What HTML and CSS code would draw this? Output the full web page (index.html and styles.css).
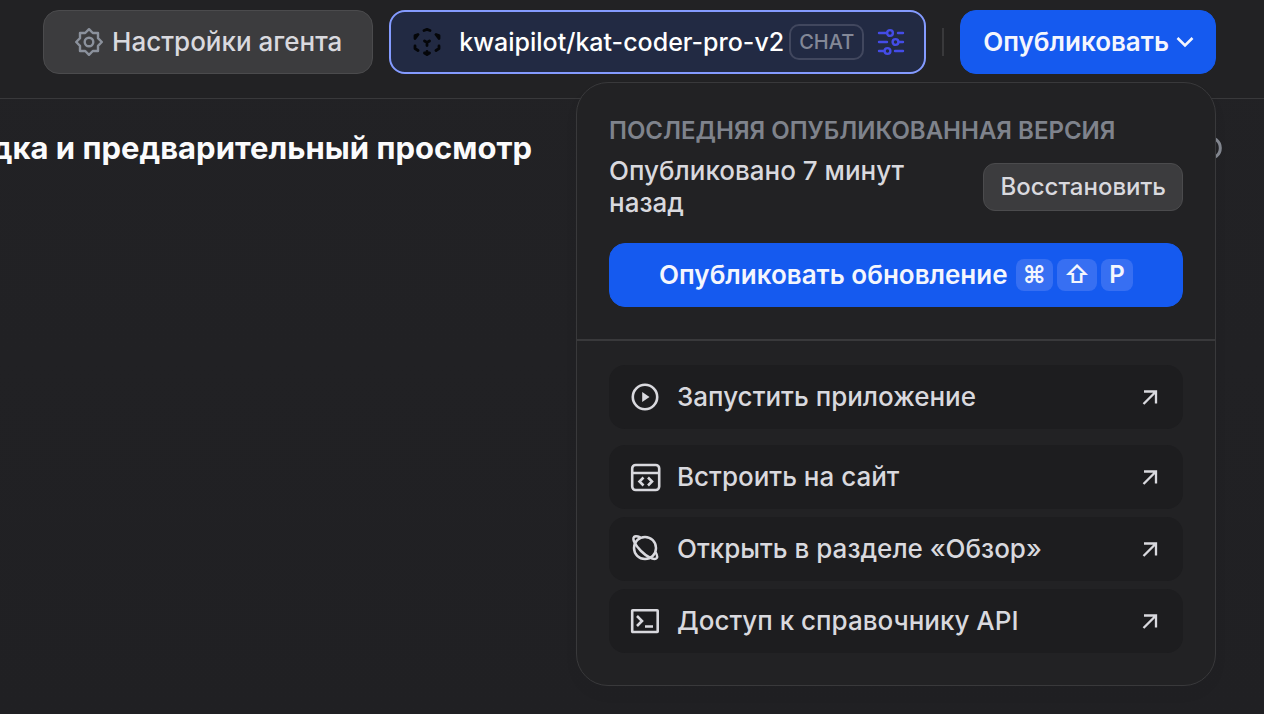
FILE: index.html
```html
<!doctype html>
<html lang="ru">
<head>
	<meta charset="UTF-8" />
	<meta name="viewport" content="width=device-width, initial-scale=1" />
	<title>Настройки агента</title>
	<link rel="stylesheet" href="styles.css">
</head>
<body>
	<header class="topbar">
		<button type="button" class="btn settings">
			<svg class="icon-sm" viewBox="0 0 28 28" fill="none" stroke="currentColor" stroke-width="2.4" stroke-linejoin="round">
				<path d="M14 1.2 17.800 5H23v5.200l3.800 3.800-3.800 3.800V23h-5.200L14 26.800 10.200 23H5v-5.200L1.200 14 5 10.200V5h5.200z"/>
				<circle cx="14" cy="14" r="4.300"/>
			</svg>
			Настройки агента
		</button>
		<button type="button" class="model">
			<svg class="icon-sm cube" viewBox="0 0 28 28" fill="none" stroke="currentColor" stroke-width="2.800" stroke-linecap="round" stroke-linejoin="round">
				<path d="M11 2.500 14 1.400l3 1.100M5 6.500 2 7.500V10.500zM23 6.500l3 1V10.500zM2 18v2.500L5 22.500M26 18v2.500L23 22.500M11.500 25l2.500 1.600 2.500-1.600zM14 23.500v2M11.500 13l2.500 1.500 2.500-1.500M14 15v2.500"/>
			</svg>
			<span class="model-name">kwaipilot/kat-coder-pro-v2</span>
			<span class="tag">CHAT</span>
			<svg class="icon-sm sliders" viewBox="0 0 28 28" fill="none" stroke="currentColor" stroke-width="2.400" stroke-linecap="round">
				<path d="M2 5h8M21 5h5M2 14h8M22 14h4M2 23h5M18 23h8"/>
				<circle cx="13" cy="5" r="2.900"/>
				<circle cx="18.500" cy="14" r="2.900"/>
				<circle cx="10.500" cy="23" r="2.900"/>
			</svg>
		</button>
		<span class="divider"></span>
		<div class="publish-wrap">
			<button type="button" class="btn primary publish" aria-expanded="true">
				Опубликовать
				<svg class="chevron" viewBox="0 0 20 20" fill="none" stroke="currentColor" stroke-width="2.600">
					<path d="m2.500 6 7.500 7.500L17.500 6"/>
				</svg>
			</button>

			<div class="menu">
				<section class="version">
					<h3>Последняя опубликованная версия</h3>
					<div class="version-row">
						<p>Опубликовано 7 минут назад</p>
						<button type="button" class="btn restore">Восстановить</button>
					</div>
					<button type="button" class="btn primary update">
						Опубликовать обновление
						<span class="keys"><kbd>⌘</kbd><kbd>⇧</kbd><kbd>P</kbd></span>
					</button>
				</section>
				<nav class="links">
					<a href="#" class="link run">
						<svg class="icon" viewBox="0 0 32 32" fill="none" stroke="currentColor" stroke-width="2.600">
							<circle cx="16" cy="16" r="12.200"/>
							<path d="M13.200 11v10l7.300-5z" fill="currentColor" stroke="none"/>
						</svg>
						<span>Запустить приложение</span>
						<svg class="arrow" viewBox="0 0 24 24" fill="none" stroke="currentColor" stroke-width="2.300"><path d="M5 6.500h12v12M16.500 7 4.500 19"/></svg>
					</a>
					<a href="#" class="link">
						<svg class="icon" viewBox="0 0 32 32" fill="none" stroke="currentColor" stroke-width="2.600">
							<rect x="3.200" y="4" width="27" height="25" rx="3.500"/>
							<path d="M3 12h27M14.500 16.500 10.500 20.500l4 4M19 16.500l4 4-4 4"/>
						</svg>
						<span>Встроить на сайт</span>
						<svg class="arrow" viewBox="0 0 24 24" fill="none" stroke="currentColor" stroke-width="2.300"><path d="M5 6.500h12v12M16.500 7 4.500 19"/></svg>
					</a>
					<a href="#" class="link">
						<svg class="icon" viewBox="0 0 32 32" fill="none" stroke="currentColor" stroke-width="2.500">
							<circle cx="16" cy="15" r="11"/>
							<path d="M11.500 4.500C8 3 6 3 5 4c-2 2.200 1.500 8.500 7 14s12.200 9.200 15.200 7.500c1.500-1 1-3.500-.7-6.500"/>
						</svg>
						<span>Открыть в разделе «Обзор»</span>
						<svg class="arrow" viewBox="0 0 24 24" fill="none" stroke="currentColor" stroke-width="2.300"><path d="M5 6.500h12v12M16.500 7 4.500 19"/></svg>
					</a>
					<a href="#" class="link">
						<svg class="icon" viewBox="0 0 32 32" fill="none" stroke="currentColor" stroke-width="2.600">
							<rect x="3.200" y="5.200" width="25.500" height="21.800" rx=".5"/>
							<path d="m8 11 5 5-5 5M16 21.500h8"/>
						</svg>
						<span>Доступ к справочнику API</span>
						<svg class="arrow" viewBox="0 0 24 24" fill="none" stroke="currentColor" stroke-width="2.300"><path d="M5 6.500h12v12M16.500 7 4.500 19"/></svg>
					</a>
				</nav>
			</div>
		</div>
	</header>

	<main class="preview">
		<h2>Отладка и предварительный просмотр</h2>
		<svg class="refresh" viewBox="0 0 32 32" fill="none" stroke="currentColor" stroke-width="3">
			<path d="M16 4.700c9 0 14.300 4.500 14.300 11.300S25 27.300 16 27.300"/>
		</svg>
	</main>
</body>
</html>
```

FILE: styles.css
```css
*{
	box-sizing: border-box;
	margin: 0;
	padding: 0;
}
body{
	min-height: 100vh;
	background: linear-gradient(#222225, #202023);
	color: #d9d9de;
	font-family: Inter, "Liberation Sans", sans-serif;
	font-size: 26px;
	font-weight: 500;
	line-height: 32px;
	overflow: hidden;
}
button{
	font: inherit;
	color: inherit;
	cursor: pointer;
}
svg{
	display: block;
	flex: none;
}

/* top bar */
.topbar{
	display: flex;
	justify-content: flex-end;
	align-items: center;
	gap: 16px;
	padding: 10px 48px 24px 0;
	background: #222224;
	border-bottom: 1px solid #39393b;
	white-space: nowrap;
}
.btn{
	display: flex;
	align-items: center;
	justify-content: center;
	height: 64px;
	border: 1px solid #4b4b4d;
	border-radius: 16px;
	background: #3c3c3e;
}
.btn.primary{
	border-color: #155aef;
	background: #155aef;
	color: #f4f6fd;
	font-weight: 600;
}
.settings{
	gap: 9px;
	padding: 0 30px 0 31px;
}
.icon-sm{
	width: 28px;
	height: 28px;
}
.settings svg{
	color: #8b919c;
}
.model{
	display: flex;
	align-items: center;
	height: 64px;
	padding: 0 19px 0 22px;
	border: 2px solid #849bff;
	border-radius: 16px;
	background: #222a43;
	color: #fff;
	font-size: 25px;
}
.cube{
	color: #050609;
}
.model-name{
	margin-left: 18px;
}
.tag{
	margin: 0 13px 0 5px;
	padding: 0 8px;
	border: 2px solid #41475e;
	border-radius: 10px;
	color: #838897;
	font-size: 20px;
}
.sliders{
	color: #444ce7;
}
.divider{
	flex: none;
	width: 2px;
	height: 28px;
	background: #39393b;
}
.publish-wrap{
	position: relative;
}
.publish{
	gap: 6px;
	padding: 0 20px 0 22px;
}
.chevron{
	width: 20px;
	height: 20px;
}

/* publish menu */
.menu{
	position: absolute;
	top: 72px;
	right: 0;
	width: 640px;
	border: 1px solid #39393b;
	border-radius: 32px;
	background: #222224;
	box-shadow: 0 8px 16px rgba(0,0,0,.03);
	white-space: normal;
}
.version{
	padding: 32px 32px;
	border-bottom: 2px solid #39393b;
}
.version h3{
	color: #7f838c;
	font-size: 24px;
	font-weight: 600;
	text-transform: uppercase;
	white-space: nowrap;
}
.version-row{
	display: flex;
	align-items: center;
	justify-content: space-between;
	gap: 24px;
	margin: 8px 0 24px;
}
.restore{
	height: 48px;
	padding: 0 16px;
	border-radius: 12px;
	font-size: 24px;
	white-space: nowrap;
}
.update{
	gap: 8px;
	width: 100%;
}
.keys{
	display: flex;
	gap: 4px;
}
kbd{
	min-width: 32px;
	height: 32px;
	padding: 0 7px;
	border-radius: 8px;
	background: #376ff2;
	font: inherit;
	font-size: 24px;
	line-height: 32px;
}
.links{
	display: flex;
	flex-direction: column;
	gap: 8px;
	padding: 24px 32px 32px;
}
.link{
	display: flex;
	align-items: center;
	gap: 16px;
	height: 64px;
	padding: 0 20px;
	border-radius: 16px;
	background: #1d1d1f;
	color: inherit;
	text-decoration: none;
}
.link span{
	flex: 1;
}
.run{
	margin-bottom: 8px;
}
.icon{
	width: 32px;
	height: 32px;
}
.arrow{
	width: 24px;
	height: 24px;
}

/* preview pane */
.preview{
	display: grid;
	grid-template-columns: 532px 1fr;
	align-items: center;
	padding: 33px 42px 32px 0;
}
.preview h2{
	display: flex;
	justify-content: flex-end;
	color: #fbfbfc;
	font-size: 31px;
	font-weight: 700;
	white-space: nowrap;
}
.refresh{
	width: 32px;
	height: 32px;
	justify-self: end;
	color: #838790;
}
```
